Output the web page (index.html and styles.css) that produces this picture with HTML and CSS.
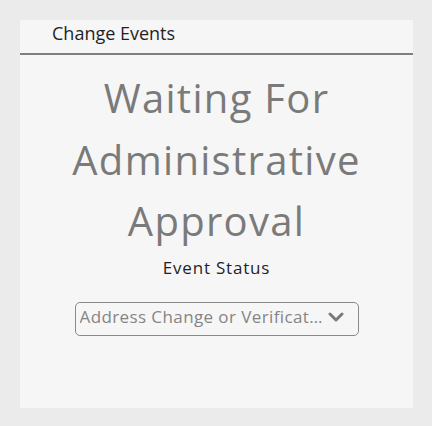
FILE: index.html
```html
<!DOCTYPE html>
<html>
<head>
<meta charset="utf-8">
<link rel="stylesheet" href="styles.css">
</head>
<body>
<div class="card">
  <div class="card-header">Change Events</div>
  <div class="card-body">
    <h1 class="status-title">Waiting For Administrative Approval</h1>
    <div class="status-label">Event Status</div>
    <div class="select">
      <span class="select-text">Address Change or Verification Request</span>
      <svg class="chevron" width="16" height="10" viewBox="0 0 16 10"><path d="M2 2 L8 8 L14 2" fill="none" stroke="#7a7a7a" stroke-width="3" stroke-linecap="round" stroke-linejoin="round"/></svg>
    </div>
  </div>
</div>
</body>
</html>
```
FILE: styles.css
```css
html, body { margin: 0; padding: 0; }
body {
  background: #ebebeb;
  padding: 20px 19px 18px 20px;
  font-family: "Open Sans", sans-serif;
}
.card {
  background: #f6f6f6;
  height: 388px;
  display: flex;
  flex-direction: column;
}
.card-header {
  height: 35px;
  box-sizing: border-box;
  border-bottom: 2px solid #7f7f7f;
  padding-left: 32px;
  padding-top: 1px;
  font-size: 18px;
  color: #1f1f26;
  line-height: 24px;
}
.card-body {
  display: flex;
  flex-direction: column;
  align-items: center;
}
.status-title {
  margin: 12px 0 0;
  font-weight: 400;
  font-size: 40px;
  line-height: 61.5px;
  letter-spacing: 1.3px;
  color: #7a7a7a;
  text-align: center;
  width: 340px;
}
.status-label {
  font-size: 17px;
  letter-spacing: 0.8px;
  color: #1f1f26;
  line-height: 22px;
  margin-top: 5px;
}
.select {
  margin-top: 23px;
  width: 284px;
  height: 34px;
  box-sizing: border-box;
  border: 1px solid #8a8a8a;
  border-radius: 5px;
  display: flex;
  align-items: center;
  padding: 0 14px 4px 4px;
  gap: 1px;
}
.select-text {
  flex: 1;
  min-width: 0;
  white-space: nowrap;
  overflow: hidden;
  text-overflow: ellipsis;
  font-size: 17px;
  letter-spacing: 0.4px;
  color: #858585;
}
.chevron { flex: none; }
```
